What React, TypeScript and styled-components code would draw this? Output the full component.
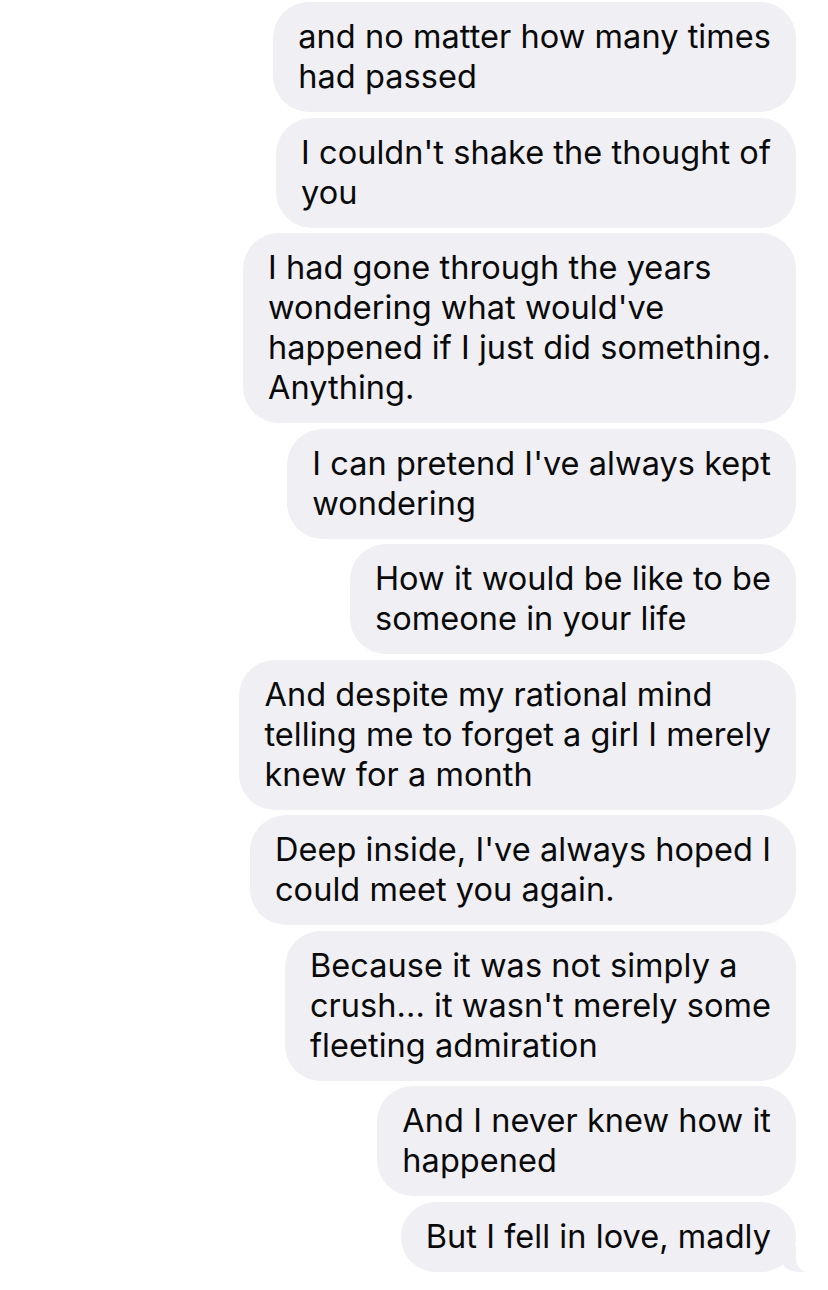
import React from "react";
import styled, { createGlobalStyle } from "styled-components";

const Global = createGlobalStyle`
  html, body { margin: 0; padding: 0; background: #ffffff; }
  body { font-family: Inter, "Noto Sans", "Liberation Sans", sans-serif; }
`;

const Thread = styled.div`
  display: flex;
  flex-direction: column;
  align-items: flex-end;
  gap: 5.5px;
  padding: 2px 32px 20px 0;
  width: 828px;
  box-sizing: border-box;
`;

const Bubble = styled.div<{ $tail?: boolean }>`
  position: relative;
  width: fit-content;
  box-sizing: border-box;
  padding: 15px 25px;
  background: #efeff4;
  border-radius: 36px;
  color: #0a0a0a;
  font-size: 32.5px;
  line-height: 40px;
  white-space: nowrap;
  letter-spacing: 0.05px;

  ${(p) =>
    p.$tail &&
    `
    &::before {
      content: "";
      position: absolute;
      right: -9px;
      bottom: 0;
      width: 24px;
      height: 26px;
      background: #efeff4;
      border-bottom-left-radius: 18px 14px;
    }
    &::after {
      content: "";
      position: absolute;
      right: -14px;
      bottom: 0;
      width: 14px;
      height: 28px;
      background: #ffffff;
      border-bottom-left-radius: 12px 14px;
    }
  `}
`;

const messages: string[][] = [
  ["and no matter how many times", "had passed"],
  ["I couldn't shake the thought of", "you"],
  [
    "I had gone through the years",
    "wondering what would've",
    "happened if I just did something.",
    "Anything.",
  ],
  ["I can pretend I've always kept", "wondering"],
  ["How it would be like to be", "someone in your life"],
  [
    "And despite my rational mind",
    "telling me to forget a girl I merely",
    "knew for a month",
  ],
  ["Deep inside, I've always hoped I", "could meet you again."],
  [
    "Because it was not simply a",
    "crush... it wasn't merely some",
    "fleeting admiration",
  ],
  ["And I never knew how it", "happened"],
  ["But I fell in love, madly"],
];

export default function App() {
  return (
    <>
      <Global />
      <Thread>
        {messages.map((lines, i) => (
          <Bubble key={i} $tail={i === messages.length - 1}>
            {lines.map((l, j) => (
              <React.Fragment key={j}>
                {j > 0 && <br />}
                {l}
              </React.Fragment>
            ))}
          </Bubble>
        ))}
      </Thread>
    </>
  );
}
